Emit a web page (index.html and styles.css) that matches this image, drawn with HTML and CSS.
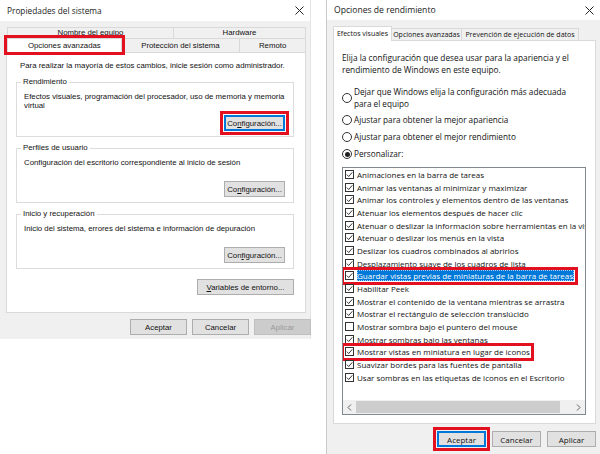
FILE: index.html
```html
<!DOCTYPE html>
<html lang="es">
<head>
    <meta charset="UTF-8">
    <title>Propiedades del sistema - Opciones de rendimiento</title>
    <link rel="stylesheet" href="styles.css">
</head>
<body>
<div class="desk">
    <section class="dlg sys">
        <header class="titlebar">
            <span class="title">Propiedades del sistema</span>
            <svg class="close" width="9" height="9" viewBox="0 0 9 9"><path d="M0.5 0.5L8.5 8.5M8.5 0.5L0.5 8.5" stroke="#222" stroke-width="1"/></svg>
        </header>

        <div class="sys-tabs">
            <div class="tabrow top">
                <span class="tab" style="width:167px">Nombre del equipo</span>
                <span class="tab" style="width:133px">Hardware</span>
            </div>
            <div class="tabrow">
                <span class="tab active mark" style="width:115px">Opciones avanzadas</span>
                <span class="tab" style="width:120px">Protección del sistema</span>
                <span class="tab" style="width:67px">Remoto</span>
            </div>
        </div>

        <div class="sys-panel">
            <p class="intro">Para realizar la mayoría de estos cambios, inicie sesión como administrador.</p>

            <fieldset class="group">
                <legend>Rendimiento</legend>
                <div class="gbody">
                    <p>Efectos visuales, programación del procesador, uso de memoria y memoria virtual</p>
                    <div class="right"><button class="btn cfg default mark">Co<u>n</u>figuración...</button></div>
                </div>
            </fieldset>

            <fieldset class="group">
                <legend>Perfiles de usuario</legend>
                <div class="gbody">
                    <p>Configuración del escritorio correspondiente al inicio de sesión</p>
                    <div class="right"><button class="btn cfg">Co<u>n</u>figuración...</button></div>
                </div>
            </fieldset>

            <fieldset class="group">
                <legend>Inicio y recuperación</legend>
                <div class="gbody">
                    <p>Inicio del sistema, errores del sistema e información de depuración</p>
                    <div class="right"><button class="btn cfg">Con<u>f</u>iguración...</button></div>
                </div>
            </fieldset>

            <div class="right env"><button class="btn wide"><u>V</u>ariables de entorno...</button></div>
        </div>

        <footer class="sys-actions">
            <button class="btn act">Aceptar</button>
            <button class="btn act">Cancelar</button>
            <button class="btn act off">Aplicar</button>
        </footer>
    </section>

    <section class="dlg perf">
        <header class="titlebar">
            <span class="title">Opciones de rendimiento</span>
            <svg class="close" width="9" height="9" viewBox="0 0 9 9"><path d="M0.5 0.5L8.5 8.5M8.5 0.5L0.5 8.5" stroke="#222" stroke-width="1"/></svg>
        </header>

        <div class="perf-tabs">
            <span class="ptab active" style="width:59px">Efectos visuales</span>
            <span class="ptab" style="width:71px">Opciones avanzadas</span>
            <span class="ptab" style="width:118px">Prevención de ejecución de datos</span>
        </div>

        <div class="perf-panel">
            <p class="lead">Elija la configuración que desea usar para la apariencia y el rendimiento de Windows en este equipo.</p>

            <div class="radios">
                <div class="radio first"><span class="dot"></span><span>Dejar que Windows elija la configuración más adecuada<br>para el equipo</span></div>
                <div class="radio"><span class="dot"></span><span>Ajustar para obtener la mejor apariencia</span></div>
                <div class="radio"><span class="dot"></span><span>Ajustar para obtener el mejor rendimiento</span></div>
                <div class="radio"><span class="dot on"></span><span>Personalizar:</span></div>
            </div>

            <div class="list">
                <div class="items">
                    <div class="item"><span class="cb on"></span><span class="txt">Animaciones en la barra de tareas</span></div>
                    <div class="item"><span class="cb on"></span><span class="txt">Animar las ventanas al minimizar y maximizar</span></div>
                    <div class="item"><span class="cb on"></span><span class="txt">Animar los controles y elementos dentro de las ventanas</span></div>
                    <div class="item"><span class="cb on"></span><span class="txt">Atenuar los elementos después de hacer clic</span></div>
                    <div class="item"><span class="cb on"></span><span class="txt">Atenuar o deslizar la información sobre herramientas en la vista</span></div>
                    <div class="item"><span class="cb on"></span><span class="txt">Atenuar o deslizar los menús en la vista</span></div>
                    <div class="item"><span class="cb on"></span><span class="txt">Deslizar los cuadros combinados al abrirlos</span></div>
                    <div class="item"><span class="cb on"></span><span class="txt">Desplazamiento suave de los cuadros de lista</span></div>
                    <div class="item sel mark"><span class="cb on"></span><span class="txt">Guardar vistas previas de miniaturas de la barra de tareas</span></div>
                    <div class="item"><span class="cb on"></span><span class="txt">Habilitar Peek</span></div>
                    <div class="item"><span class="cb on"></span><span class="txt">Mostrar el contenido de la ventana mientras se arrastra</span></div>
                    <div class="item"><span class="cb on"></span><span class="txt">Mostrar el rectángulo de selección translúcido</span></div>
                    <div class="item"><span class="cb"></span><span class="txt">Mostrar sombra bajo el puntero del mouse</span></div>
                    <div class="item"><span class="cb on"></span><span class="txt">Mostrar sombras bajo las ventanas</span></div>
                    <div class="item mark"><span class="cb on"></span><span class="txt">Mostrar vistas en miniatura en lugar de iconos</span></div>
                    <div class="item"><span class="cb on"></span><span class="txt">Suavizar bordes para las fuentes de pantalla</span></div>
                    <div class="item"><span class="cb on"></span><span class="txt">Usar sombras en las etiquetas de iconos en el Escritorio</span></div>
                </div>
                <div class="hscroll">
                    <span class="arrow"><svg width="5" height="7" viewBox="0 0 5 7"><path d="M4 0.5L1 3.5L4 6.5" fill="none" stroke="#606060" stroke-width="1"/></svg></span>
                    <span class="thumb"></span>
                    <span class="track"></span>
                    <span class="arrow"><svg width="5" height="7" viewBox="0 0 5 7"><path d="M1 0.5L4 3.5L1 6.5" fill="none" stroke="#606060" stroke-width="1"/></svg></span>
                </div>
            </div>
        </div>

        <footer class="perf-actions">
            <button class="btn pact default mark">Aceptar</button>
            <button class="btn pact">Cancelar</button>
            <button class="btn pact">Aplicar</button>
        </footer>
    </section>
</div>
</body>
</html>
```

FILE: styles.css
```css
body {
    margin: 0;
    background: #fff;
    color: #111;
}
p {
    margin: 0;
}
.desk {
    display: flex;
    align-items: flex-start;
    width: 600px;
    height: 454px;
    overflow: hidden;
}
.dlg {
    background: #f0f0f0;
    display: flex;
    flex-direction: column;
    box-sizing: border-box;
}
.sys {
    width: 311px;
    height: 339px;
    font: 7.8px "Liberation Sans", Arial, sans-serif;
    border-right: 1px solid #e4e4e4;
}
.perf {
    width: 274px;
    height: 454px;
    margin-left: 15px;
    border-left: 1px solid #c9c9c9;
    font-family: "Open Sans", sans-serif;
}
.titlebar {
    height: 21px;
    background: #fff;
    display: flex;
    align-items: center;
    justify-content: space-between;
    padding: 0 6px 0 7px;
    flex: none;
}
.perf .titlebar {
    height: 20px;
}
.title {
    font: 8.3px "Open Sans", sans-serif;
    color: #222;
}
.perf .title {
    font-size: 8.6px;
}
.mark {
    outline: 3px solid #e3101f;
    outline-offset: 0;
}
.btn {
    box-sizing: border-box;
    height: 16px;
    padding: 0;
    background: #e1e1e1;
    border: 1px solid #adadad;
    color: #111;
    font: inherit;
}
.btn.default {
    border-color: #0078d7;
    box-shadow: inset 0 0 0 1px #0078d7;
}
.btn.default.mark {
    outline-offset: 1px;
}

/* ventana izquierda */
.sys-tabs {
    margin: 6px 5px 0 7px;
}
.tabrow {
    display: flex;
}
.tab {
    box-sizing: border-box;
    height: 11px;
    line-height: 10px;
    margin-right: -1px;
    border: 1px solid #d9d9d9;
    border-bottom: none;
    text-align: center;
    white-space: nowrap;
    background: #f0f0f0;
}
.tabrow:not(.top) .tab {
    height: 14px;
    line-height: 13px;
}
.tab.active {
    background: #fff;
    height: 15px;
    margin-bottom: -1px;
    position: relative;
    z-index: 1;
}
.sys-panel {
    box-sizing: border-box;
    height: 261px;
    margin: 0 4px 0 6px;
    background: #fff;
    border: 1px solid #d9d9d9;
    padding: 0 11px 0 9px;
    display: flex;
    flex-direction: column;
}
.intro {
    margin-top: 8px;
    padding-left: 4px;
    line-height: 9px;
}
.group {
    margin: 6px 0 0;
    padding: 0 8px 5px 7px;
    border: 1px solid #dcdcdc;
}
.group:first-of-type {
    margin-top: 7px;
}
.group legend {
    padding: 0 2px;
    margin-left: -3px;
    line-height: 10px;
}
.gbody {
    height: 39px;
    padding-top: 5px;
    display: flex;
    flex-direction: column;
    justify-content: space-between;
}
.gbody p {
    line-height: 9px;
}
.right {
    display: flex;
    justify-content: flex-end;
}
.cfg {
    width: 61px;
}
.env {
    margin-top: 10px;
}
.wide {
    width: 97px;
}
.sys-actions {
    display: flex;
    justify-content: flex-end;
    gap: 5px;
    padding: 6px 0 0;
    margin-right: -1px;
}
.act {
    width: 57px;
}
.act.off {
    background: #cccccc;
    border-color: #bfbfbf;
    color: #9a9a9a;
}

/* ventana derecha */
.perf-tabs {
    display: flex;
    align-items: flex-end;
    margin: 6px 0 0 6px;
    font-size: 7px;
}
.ptab {
    box-sizing: border-box;
    height: 12px;
    line-height: 11px;
    margin-right: -1px;
    border: 1px solid #d9d9d9;
    border-bottom: none;
    text-align: center;
    white-space: nowrap;
}
.ptab.active {
    height: 15px;
    line-height: 14px;
    margin-bottom: -1px;
    background: #fff;
    position: relative;
    z-index: 1;
}
.perf-panel {
    box-sizing: border-box;
    height: 384px;
    margin: 0 4px 0 6px;
    background: #fff;
    border: 1px solid #d9d9d9;
    padding: 0 8px;
    font-size: 8px;
}
.lead {
    margin-top: 11px;
    line-height: 11.5px;
    font-size: 8.3px;
}
.radios {
    margin-top: 11px;
    display: flex;
    flex-direction: column;
    gap: 5px;
    font-size: 8.2px;
}
.radio {
    display: flex;
    align-items: center;
    gap: 2px;
    line-height: 12px;
    white-space: nowrap;
}
.radio.first {
    margin-bottom: -1px;
}
.dot {
    box-sizing: border-box;
    width: 10px;
    height: 10px;
    border: 1px solid #333;
    border-radius: 50%;
    display: flex;
    align-items: center;
    justify-content: center;
    flex: none;
}
.dot.on::after {
    content: "";
    width: 5px;
    height: 5px;
    border-radius: 50%;
    background: #222;
}
.list {
    box-sizing: border-box;
    height: 248px;
    margin-top: 7px;
    margin-right: 1px;
    border: 1px solid #828790;
    display: flex;
    flex-direction: column;
}
.items {
    flex: 1;
    overflow: hidden;
    display: flex;
    flex-direction: column;
}
.item {
    height: 12.7px;
    flex: none;
    display: flex;
    align-items: center;
    gap: 2px;
    padding: 0 1px 0 1px;
    margin-left: 1px;
    white-space: nowrap;
}
.item.mark {
    align-self: flex-start;
}
.cb {
    box-sizing: border-box;
    width: 9px;
    height: 9px;
    border: 1px solid #333;
    flex: none;
    margin-right: 1px;
    background: #fff center / 7px 7px no-repeat;
}
.cb.on {
    background-image: url("data:image/svg+xml;utf8,<svg xmlns='http://www.w3.org/2000/svg' viewBox='0 0 7 7'><path d='M0.8 3.6L2.7 5.5L6.3 1.3' fill='none' stroke='%23222' stroke-width='0.9'/></svg>");
}
.item.sel .txt {
    background: #0078d7;
    color: #fff;
    outline: 1px dotted #9fd0ff;
    outline-offset: -1px;
    padding-right: 1px;
}
.hscroll {
    height: 14px;
    flex: none;
    display: flex;
    background: #f0f0f0;
}
.arrow {
    width: 13px;
    display: flex;
    align-items: center;
    justify-content: center;
}
.thumb {
    width: 204px;
    margin: 1px 0;
    background: #cdcdcd;
}
.track {
    flex: 1;
}
.perf-actions {
    display: flex;
    justify-content: flex-end;
    gap: 6px;
    padding: 7px 4px 0 0;
    font-size: 8px;
}
.pact {
    width: 49px;
}
```
